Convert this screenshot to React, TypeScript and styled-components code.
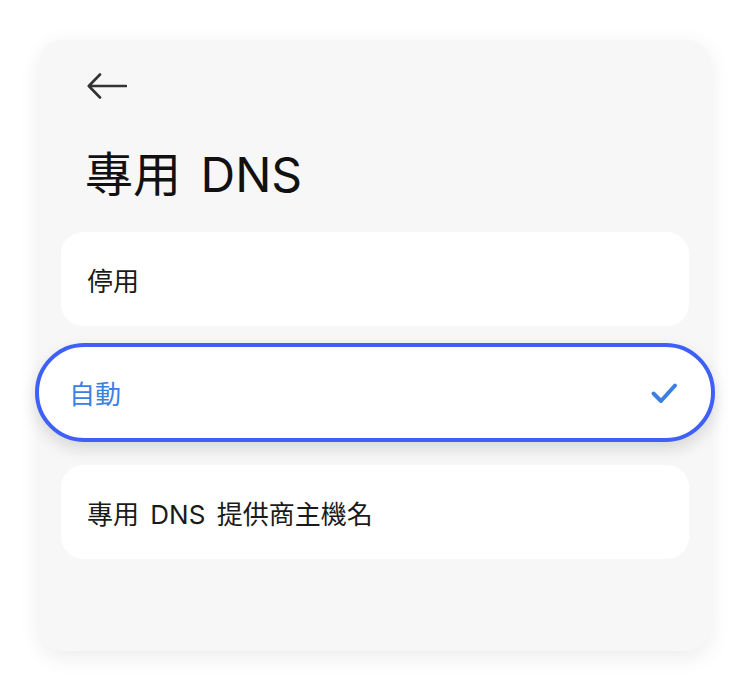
import React from "react";
import styled, { createGlobalStyle } from "styled-components";

const Global = createGlobalStyle`
  html, body { margin: 0; padding: 0; background: #ffffff; }
  body { font-family: Inter, "Noto Sans CJK TC", sans-serif; }
`;

const Page = styled.div`
  padding: 40px;
`;

const Card = styled.div`
  width: 670px;
  height: 611px;
  box-sizing: border-box;
  background: #f7f7f7;
  border-radius: 22px;
  box-shadow: 0 6px 22px rgba(0, 0, 0, 0.08);
  padding: 33px 21px 0;
  display: flex;
  flex-direction: column;
`;

const BackButton = styled.button`
  display: flex;
  align-items: center;
  background: none;
  border: none;
  padding: 0;
  margin-left: 26px;
  width: 42px;
  height: 26px;
  color: #333;
  cursor: pointer;
`;

const Title = styled.h1`
  margin: 46px 0 27px 24px;
  font-family: Inter, "Noto Sans CJK TC", sans-serif;
  font-weight: 400;
  font-size: 48px;
  line-height: 60px;
  word-spacing: 6px;
  color: #111;
`;

const List = styled.div`
  display: flex;
  flex-direction: column;
`;

const Option = styled.div<{ $selected?: boolean }>`
  display: flex;
  align-items: center;
  justify-content: space-between;
  box-sizing: border-box;
  background: #ffffff;
  font-family: Inter, "Noto Sans CJK TC", sans-serif;
  font-size: 26px;
  word-spacing: 4px;
  height: ${(p) => (p.$selected ? "99px" : "94px")};
  border-radius: ${(p) => (p.$selected ? "50px" : "22px")};
  padding: ${(p) => (p.$selected ? "0 33px 0 30px" : "0 26px")};
  margin: ${(p) => (p.$selected ? "17px -26px 23px -26px" : "0")};
  border: ${(p) => (p.$selected ? "4px solid #3f60f6" : "none")};
  box-shadow: ${(p) => (p.$selected ? "0 7px 16px rgba(0,0,0,0.13)" : "none")};
  color: ${(p) => (p.$selected ? "#3a7fe2" : "#1a1a1a")};
`;

const Check = styled.svg`
  width: 28px;
  height: 26px;
  color: #3a7fe2;
`;

export default function App() {
  return (
    <>
      <Global />
      <Page>
        <Card>
          <BackButton aria-label="back">
            <svg width="40" height="26" viewBox="0 0 40 26" fill="none">
              <path
                d="M39 13H2M13 1.5L1.8 13L13 24.5"
                stroke="currentColor"
                strokeWidth="2.6"
                strokeLinecap="round"
                strokeLinejoin="round"
              />
            </svg>
          </BackButton>
          <Title>專用 DNS</Title>
          <List>
            <Option>停用</Option>
            <Option $selected>
              <span>自動</span>
              <Check viewBox="0 0 28 26" fill="none">
                <path
                  d="M3.5 13.5L11 21L25 5.5"
                  stroke="currentColor"
                  strokeWidth="4"
                  strokeLinecap="round"
                  strokeLinejoin="round"
                />
              </Check>
            </Option>
            <Option>專用 DNS 提供商主機名</Option>
          </List>
        </Card>
      </Page>
    </>
  );
}
